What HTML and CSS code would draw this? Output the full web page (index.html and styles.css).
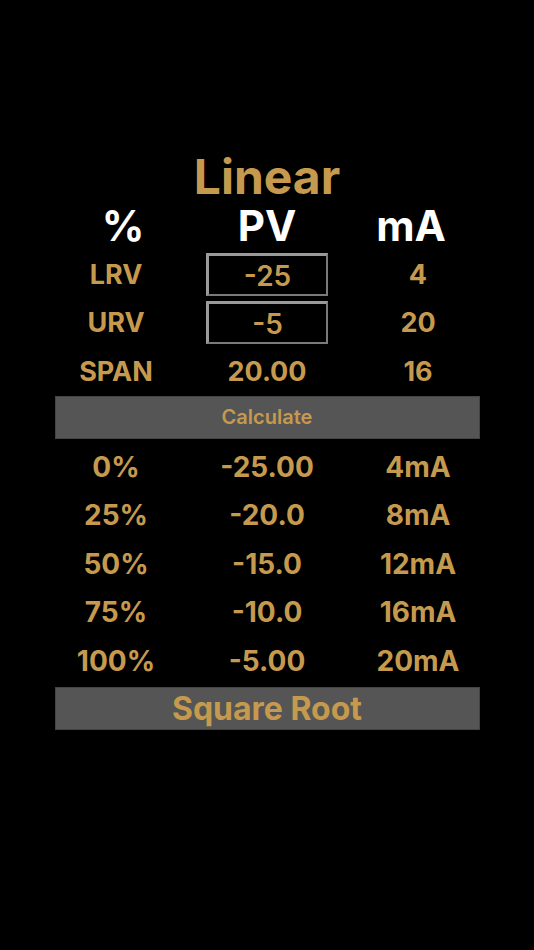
FILE: index.html
```html
<!DOCTYPE html>
<html>
<head>
<meta charset="utf-8">
<link rel="stylesheet" href="styles.css">
</head>
<body>
<main class="app">
  <h1 class="title">Linear</h1>
  <div class="grid heads">
    <div>%</div><div>PV</div><div>mA</div>
  </div>
  <div class="grid inputs">
    <div class="label">LRV</div>
    <div class="cell"><div class="box">-25</div></div>
    <div class="label">4</div>
    <div class="label">URV</div>
    <div class="cell"><div class="box">-5</div></div>
    <div class="label">20</div>
    <div class="label">SPAN</div>
    <div class="label">20.00</div>
    <div class="label">16</div>
  </div>
  <button class="btn calc">Calculate</button>
  <div class="grid results">
    <div>0%</div><div>-25.00</div><div>4mA</div>
    <div>25%</div><div>-20.0</div><div>8mA</div>
    <div>50%</div><div>-15.0</div><div>12mA</div>
    <div>75%</div><div>-10.0</div><div>16mA</div>
    <div>100%</div><div>-5.00</div><div>20mA</div>
  </div>
  <button class="btn sqrt">Square Root</button>
</main>
</body>
</html>
```
FILE: styles.css
```css
html, body {
  margin: 0;
  padding: 0;
  background: #000;
}
body {
  font-family: Inter, "Noto Sans", sans-serif;
  color: #c69a4e;
}
.app {
  width: 534px;
  padding-top: 152px;
  display: flex;
  flex-direction: column;
  align-items: center;
}
.title {
  margin: 0;
  font-size: 48px;
  font-weight: 700;
  line-height: 50px;
  height: 50px;
}
.grid {
  display: grid;
  grid-template-columns: 151px 151px 151px;
  text-align: center;
}
.heads {
  grid-template-columns: 144px 144px 144px;
  color: #fff;
  font-size: 42px;
  font-weight: 700;
  line-height: 48px;
}
.inputs {
  font-size: 27px;
  font-weight: 700;
  grid-auto-rows: 48.5px;
  align-items: center;
}
.cell {
  display: flex;
  justify-content: center;
}
.box {
  width: 117px;
  height: 38px;
  line-height: 40px;
  border-top: 3px solid #9a9a9a;
  border-left: 3px solid #9a9a9a;
  border-right: 2px solid #7a7a7a;
  border-bottom: 2px solid #7a7a7a;
  font-size: 28px;
  font-weight: 600;
}
.btn {
  width: 425px;
  height: 43px;
  background: #555;
  border: 1px solid #444;
  color: #c69a4e;
  font-family: inherit;
  font-weight: 700;
  padding: 0;
}
.calc {
  font-size: 20px;
  font-weight: 600;
  margin-top: 0;
}
.results {
  font-size: 28px;
  font-weight: 700;
  grid-auto-rows: 48.5px;
  align-items: center;
  margin-top: 4px;
}
.sqrt {
  font-size: 32px;
  margin-top: 2px;
}
```
